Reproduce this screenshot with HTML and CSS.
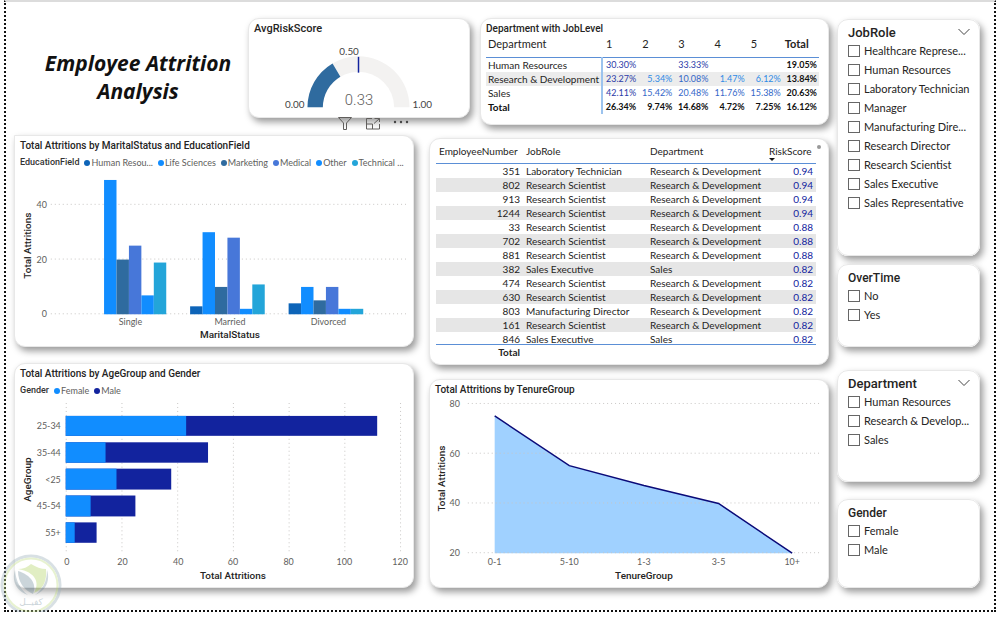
FILE: index.html
```html
<!DOCTYPE html>
<html lang="en">
<head>
    <meta charset="UTF-8">
    <meta name="viewport" content="width=device-width, initial-scale=1.0">
    <title>Employee Attrition Analysis</title>
    <link rel="stylesheet" href="styles.css">
</head>
<body>
    <div class="report">
        <main class="main">
            <header class="top-row">
                <h1>Employee Attrition Analysis</h1>

                <section class="card gauge">
                    <h2 class="gauge-title">AvgRiskScore</h2>
                    <svg class="chart" viewBox="0 0 222 80">
                        <path d="M59 70 A51.5 51.5 0 0 1 162 70 H146.500 A36 36 0 0 0 74.500 70 Z" fill="#f3f2f1"/>
                        <path d="M59 70 A51.5 51.5 0 0 1 84.300 25.700 L92.200 39 A36 36 0 0 0 74.500 70 Z" fill="#2f6b9f"/>
                        <path d="M110.500 19 V35" stroke="#12239e" stroke-width="1.500"/>
                        <text class="gauge-label" x="101" y="17" text-anchor="middle">0.50</text>
                        <text class="gauge-label" x="56" y="71" text-anchor="end">0.00</text>
                        <text class="gauge-label" x="165" y="71">1.00</text>
                        <text class="gauge-value" x="111" y="68" text-anchor="middle">0.33</text>
                    </svg>
                    <div class="toolbar">
                        <button type="button" aria-label="Filters">
                            <svg width="16" height="14" viewBox="0 0 16 14"><path d="M1.500 0.500 H14.500 L9.500 6 V12.500 H6.500 V6 Z" fill="none" stroke="#605e5c"/></svg>
                        </button>
                        <button type="button" aria-label="Focus mode">
                            <svg width="16" height="14" viewBox="0 0 16 14"><path d="M7 1.500 H1.500 V12 H14.500 V7 M1.500 7 H7.500 V12 M9.500 1.500 H14.500 V5 M14.500 1.500 L9 6.500" fill="none" stroke="#605e5c"/></svg>
                        </button>
                        <button type="button" aria-label="More options">
                            <svg width="16" height="14" viewBox="0 0 16 14"><g fill="#444"><circle cx="2" cy="5" r="1.200"/><circle cx="8" cy="5" r="1.200"/><circle cx="14" cy="5" r="1.200"/></g></svg>
                        </button>
                    </div>
                </section>

                <section class="card matrix-card">
                    <h2>Department with JobLevel</h2>
                    <table class="matrix">
                        <thead>
                            <tr><th class="dept">Department</th><th>1</th><th>2</th><th>3</th><th>4</th><th>5</th><th class="total">Total</th></tr>
                        </thead>
                        <tbody>
                            <tr><th>Human Resources</th><td class="dark">30.30%</td><td></td><td class="dark">33.33%</td><td></td><td></td><td class="total">19.05%</td></tr>
                            <tr class="alt"><th>Research &amp; Development</th><td class="dark">23.27%</td><td class="light">5.34%</td><td class="mid">10.08%</td><td class="light">1.47%</td><td class="light">6.12%</td><td class="total">13.84%</td></tr>
                            <tr><th>Sales</th><td class="dark">42.11%</td><td class="mid">15.42%</td><td class="mid">20.48%</td><td class="mid">11.76%</td><td class="mid">15.38%</td><td class="total">20.63%</td></tr>
                        </tbody>
                        <tfoot>
                            <tr><th>Total</th><td>26.34%</td><td>9.74%</td><td>14.68%</td><td>4.72%</td><td>7.25%</td><td>16.12%</td></tr>
                        </tfoot>
                    </table>
                </section>
            </header>

            <div class="column column-left">
                <section class="card card-marital">
                    <h2>Total Attritions by MaritalStatus and EducationField</h2>
                    <div class="legend">
                        <b>EducationField</b>
                        <span class="key hr">Human Resou...</span>
                        <span class="key life">Life Sciences</span>
                        <span class="key marketing">Marketing</span>
                        <span class="key medical">Medical</span>
                        <span class="key life">Other</span>
                        <span class="key technical">Technical ...</span>
                    </div>
                    <svg class="chart" viewBox="0 0 400 174">
                        <g class="grid">
                            <path d="M36 31.500 H394"/>
                            <path d="M36 86.500 H394"/>
                            <path d="M36 141.500 H394"/>
                        </g>
                        <!-- Single -->
                        <rect x="89.500" y="7" width="12.500" height="135" fill="#118dff"/>
                        <rect x="102" y="87" width="12.500" height="55" fill="#2f6b9f"/>
                        <rect x="114.500" y="73" width="12.500" height="69" fill="#4777d9"/>
                        <rect x="127" y="123" width="12.500" height="19" fill="#118dff"/>
                        <rect x="139.500" y="90" width="12.500" height="52" fill="#23a5d9"/>
                        <!-- Married -->
                        <rect x="176" y="134" width="12.500" height="8" fill="#0d64b8"/>
                        <rect x="188.500" y="59.500" width="12.500" height="82.500" fill="#118dff"/>
                        <rect x="201" y="114.500" width="12.500" height="27.500" fill="#2f6b9f"/>
                        <rect x="213.500" y="65" width="12.500" height="77" fill="#4777d9"/>
                        <rect x="226" y="136.500" width="12.500" height="5.500" fill="#118dff"/>
                        <rect x="238.500" y="112" width="12.500" height="30" fill="#23a5d9"/>
                        <!-- Divorced -->
                        <rect x="275" y="131" width="12.500" height="11" fill="#0d64b8"/>
                        <rect x="287.500" y="114.500" width="12.500" height="27.500" fill="#118dff"/>
                        <rect x="300" y="128" width="12.500" height="14" fill="#2f6b9f"/>
                        <rect x="312.500" y="114.500" width="12.500" height="27.500" fill="#4777d9"/>
                        <rect x="325" y="136.500" width="12.500" height="5.500" fill="#118dff"/>
                        <rect x="337.500" y="136.500" width="12.500" height="5.500" fill="#23a5d9"/>
                        <g class="tick" text-anchor="end">
                            <text x="32" y="35">40</text>
                            <text x="32" y="90">20</text>
                            <text x="32" y="145">0</text>
                        </g>
                        <g class="tick" text-anchor="middle">
                            <text x="116" y="153">Single</text>
                            <text x="216" y="153">Married</text>
                            <text x="315" y="153">Divorced</text>
                        </g>
                        <text class="axis" x="216" y="166" text-anchor="middle">MaritalStatus</text>
                        <text class="axis" transform="translate(16 73) rotate(-90)" text-anchor="middle">Total Attritions</text>
                    </svg>
                </section>

                <section class="card card-age">
                    <h2>Total Attritions by AgeGroup and Gender</h2>
                    <div class="legend">
                        <b>Gender</b>
                        <span class="key life">Female</span>
                        <span class="key male">Male</span>
                    </div>
                    <svg class="chart" viewBox="0 0 400 187">
                        <g class="grid">
                            <path d="M51.500 2 V153"/>
                            <path d="M107.500 2 V153"/>
                            <path d="M163.500 2 V153"/>
                            <path d="M219.500 2 V153"/>
                            <path d="M275.500 2 V153"/>
                            <path d="M331.500 2 V153"/>
                            <path d="M387.500 2 V153"/>
                        </g>
                        <g fill="#12239e">
                            <rect x="51" y="15" width="313" height="20"/>
                            <rect x="51" y="41.500" width="143" height="20.500"/>
                            <rect x="51" y="68" width="106" height="21"/>
                            <rect x="51" y="95" width="70" height="21"/>
                            <rect x="51" y="122" width="31" height="20.500"/>
                        </g>
                        <g fill="#118dff">
                            <rect x="51" y="15" width="121" height="20"/>
                            <rect x="51" y="41.500" width="40" height="20.500"/>
                            <rect x="51" y="68" width="51" height="21"/>
                            <rect x="51" y="95" width="25" height="21"/>
                            <rect x="51" y="122" width="9" height="20.500"/>
                        </g>
                        <g class="tick" text-anchor="end">
                            <text x="46" y="28">25-34</text>
                            <text x="46" y="55">35-44</text>
                            <text x="46" y="82">&lt;25</text>
                            <text x="46" y="109">45-54</text>
                            <text x="46" y="136">55+</text>
                        </g>
                        <g class="tick" text-anchor="middle">
                            <text x="52" y="165">0</text>
                            <text x="108" y="165">20</text>
                            <text x="164" y="165">40</text>
                            <text x="219" y="165">60</text>
                            <text x="275" y="165">80</text>
                            <text x="331" y="165">100</text>
                            <text x="387" y="165">120</text>
                        </g>
                        <text class="axis" x="219" y="179" text-anchor="middle">Total Attritions</text>
                        <text class="axis" transform="translate(16 79) rotate(-90)" text-anchor="middle">AgeGroup</text>
                    </svg>
                </section>
            </div>

            <div class="column column-mid">
                <section class="card card-employees">
                    <div class="employees-scroll">
                        <table class="employees">
                            <thead>
                                <tr><th class="num">EmployeeNumber</th><th class="role">JobRole</th><th>Department</th><th class="risk">RiskScore</th></tr>
                            </thead>
                            <tbody>
                                <tr><td>351</td><td>Laboratory Technician</td><td>Research &amp; Development</td><td>0.94</td></tr>
                                <tr><td>802</td><td>Research Scientist</td><td>Research &amp; Development</td><td>0.94</td></tr>
                                <tr><td>913</td><td>Research Scientist</td><td>Research &amp; Development</td><td>0.94</td></tr>
                                <tr><td>1244</td><td>Research Scientist</td><td>Research &amp; Development</td><td>0.94</td></tr>
                                <tr><td>33</td><td>Research Scientist</td><td>Research &amp; Development</td><td>0.88</td></tr>
                                <tr><td>702</td><td>Research Scientist</td><td>Research &amp; Development</td><td>0.88</td></tr>
                                <tr><td>881</td><td>Research Scientist</td><td>Research &amp; Development</td><td>0.88</td></tr>
                                <tr><td>382</td><td>Sales Executive</td><td>Sales</td><td>0.82</td></tr>
                                <tr><td>474</td><td>Research Scientist</td><td>Research &amp; Development</td><td>0.82</td></tr>
                                <tr><td>630</td><td>Research Scientist</td><td>Research &amp; Development</td><td>0.82</td></tr>
                                <tr><td>803</td><td>Manufacturing Director</td><td>Research &amp; Development</td><td>0.82</td></tr>
                                <tr><td>161</td><td>Research Scientist</td><td>Research &amp; Development</td><td>0.82</td></tr>
                                <tr><td>846</td><td>Sales Executive</td><td>Sales</td><td>0.82</td></tr>
                            </tbody>
                            <tfoot>
                                <tr><td>Total</td><td></td><td></td><td></td></tr>
                            </tfoot>
                        </table>
                    </div>
                    <span class="scroll-dot"></span>
                </section>

                <section class="card card-tenure">
                    <h2>Total Attritions by TenureGroup</h2>
                    <svg class="chart" viewBox="0 0 400 192">
                        <path d="M65 20 L140 70 L215 90 L290 108 L364 158 H65 Z" fill="#a0d1ff"/>
                        <g class="grid">
                            <path d="M38 7.500 H393"/>
                            <path d="M38 57.500 H393"/>
                            <path d="M38 107.500 H393"/>
                            <path d="M38 157.500 H393"/>
                        </g>
                        <path d="M65 20 L140 70 L215 90 L290 108 L364 158" fill="none" stroke="#0a0a78" stroke-width="1.500"/>
                        <g class="tick" text-anchor="end">
                            <text x="30" y="11">80</text>
                            <text x="30" y="61">60</text>
                            <text x="30" y="111">40</text>
                            <text x="30" y="161">20</text>
                        </g>
                        <g class="tick" text-anchor="middle">
                            <text x="65" y="170">0-1</text>
                            <text x="140" y="170">5-10</text>
                            <text x="215" y="170">1-3</text>
                            <text x="290" y="170">3-5</text>
                            <text x="364" y="170">10+</text>
                        </g>
                        <text class="axis" x="215" y="184" text-anchor="middle">TenureGroup</text>
                        <text class="axis" transform="translate(15 83) rotate(-90)" text-anchor="middle">Total Attritions</text>
                    </svg>
                </section>
            </div>
        </main>

        <aside class="slicers">
            <fieldset class="card slicer slicer-role">
                <div class="slicer-head">
                    <h3 class="large">JobRole</h3>
                    <button type="button" aria-label="Expand JobRole"><svg width="12" height="8" viewBox="0 0 12 8"><path d="M0.500 1 L6 6.500 L11.500 1" fill="none" stroke="#444"/></svg></button>
                </div>
                <label><input type="checkbox">Healthcare Represe...</label>
                <label><input type="checkbox">Human Resources</label>
                <label><input type="checkbox">Laboratory Technician</label>
                <label><input type="checkbox">Manager</label>
                <label><input type="checkbox">Manufacturing Dire...</label>
                <label><input type="checkbox">Research Director</label>
                <label><input type="checkbox">Research Scientist</label>
                <label><input type="checkbox">Sales Executive</label>
                <label><input type="checkbox">Sales Representative</label>
            </fieldset>

            <fieldset class="card slicer slicer-overtime">
                <div class="slicer-head">
                    <h3>OverTime</h3>
                </div>
                <label><input type="checkbox">No</label>
                <label><input type="checkbox">Yes</label>
            </fieldset>

            <fieldset class="card slicer slicer-department">
                <div class="slicer-head">
                    <h3 class="large">Department</h3>
                    <button type="button" aria-label="Expand Department"><svg width="12" height="8" viewBox="0 0 12 8"><path d="M0.500 1 L6 6.500 L11.500 1" fill="none" stroke="#444"/></svg></button>
                </div>
                <label><input type="checkbox">Human Resources</label>
                <label><input type="checkbox">Research &amp; Develop...</label>
                <label><input type="checkbox">Sales</label>
            </fieldset>

            <fieldset class="card slicer slicer-gender">
                <div class="slicer-head">
                    <h3>Gender</h3>
                </div>
                <label><input type="checkbox">Female</label>
                <label><input type="checkbox">Male</label>
            </fieldset>
        </aside>

        <svg class="watermark" width="64" height="64" viewBox="0 0 64 64">
            <circle cx="32" cy="32" r="29" fill="#ffffff" fill-opacity="0.4" stroke="#9fb3bd" stroke-width="3"/>
            <circle cx="32" cy="32" r="26.500" fill="none" stroke="#c5e08c" stroke-width="2"/>
            <path d="M32 11 C37 14 42 16 47 16 C48 27 45 36 35 40 C41 30 37 19 19 16 C24 16 29 14 32 11 Z" fill="#b5d66b"/>
            <path d="M19 18 C32 22 38 31 34 41 C25 37 19 29 19 18 Z" fill="#7f98a5"/>
            <path d="M16 17 C12 29 19 39 29 42 C21 36 17 28 16 17 Z M48 17 C52 29 45 39 36 42 C44 36 48 28 48 17 Z" fill="#8fa5b0"/>
            <text x="32" y="52" text-anchor="middle">كفيــل</text>
        </svg>
    </div>
</body>
</html>
```

FILE: styles.css
```css
* {
    box-sizing: border-box;
}

body {
    margin: 0;
    background-color: #fff;
    color: #252423;
    font-family: Lato, "Open Sans", sans-serif;
    font-size: 10px;
}

h1, h2, h3 {
    margin: 0;
}

button {
    display: flex;
    padding: 0;
    border: none;
    background: none;
    cursor: pointer;
}

.report {
    position: relative;
    display: grid;
    grid-template-columns: minmax(0, 815fr) minmax(0, 143fr);
    gap: 8px;
    margin: 0 4px;
    padding: 16px 14px 22px 8px;
    border: 2px dotted #111;
    border-top: 2px solid #dcdcdc;
}

.main {
    display: grid;
    grid-template-columns: minmax(0, 1fr) minmax(0, 1fr);
    column-gap: 15px;
    align-content: start;
}

.top-row {
    grid-column: 1 / 3;
    display: grid;
    grid-template-columns: minmax(0, 224fr) minmax(0, 222fr) minmax(0, 349fr);
    gap: 10px;
    align-items: start;
}

h1 {
    padding: 31px 0 0 24px;
    font-family: "Open Sans", sans-serif;
    font-size: 21px;
    line-height: 28px;
    font-style: italic;
    text-align: center;
    color: #111;
}

.card {
    position: relative;
    min-width: 0;
    background-color: #fff;
    border: 1px solid #e8e8e8;
    border-radius: 11px;
    box-shadow: 3px 4px 7px rgba(0, 0, 0, 0.4);
}

.card h2 {
    padding: 3px 5px 0;
    font-family: Roboto, sans-serif;
    font-size: 10px;
    line-height: 13px;
    font-weight: 500;
    white-space: nowrap;
}

.chart {
    display: block;
    width: 100%;
    height: auto;
}

.grid path {
    fill: none;
    stroke: #c8c6c4;
    stroke-dasharray: 1 3;
}

.tick {
    fill: #605e5c;
    font-size: 9px;
}

.axis {
    fill: #252423;
    font-family: Roboto, sans-serif;
    font-size: 10px;
    font-weight: 500;
}

/* gauge */
.card .gauge-title {
    padding-bottom: 3px;
    font-size: 11px;
}

.gauge-label {
    fill: #444;
    font-size: 10px;
}

.gauge-value {
    fill: #605e5c;
    font-family: Roboto, sans-serif;
    font-size: 15px;
    font-weight: 300;
}

.toolbar {
    position: absolute;
    top: 100%;
    right: 60px;
    display: flex;
    gap: 12px;
}

/* department matrix */
.matrix-card {
    min-height: 107px;
}

.matrix {
    width: calc(100% - 14px);
    margin: 0 9px 0 5px;
    border-collapse: collapse;
    table-layout: fixed;
    font-size: 9px;
    line-height: 14px;
}

.matrix th, .matrix td {
    padding: 0 2px;
    white-space: nowrap;
}

.matrix th {
    font-size: 10px;
    font-weight: 400;
    text-align: left;
}

.matrix thead th {
    padding: 2px 4px 6px;
    border-bottom: 1px solid #5b8fd6;
    font-size: 11px;
}

.matrix thead .dept {
    width: 116px;
    padding-left: 2px;
}

.matrix thead .total {
    padding-left: 2px;
    font-weight: 700;
}

.matrix tbody th, .matrix tfoot th {
    border-right: 2px solid #9cc3ee;
}

.matrix td {
    text-align: right;
}

.matrix .dark {
    color: #2b3ba8;
}

.matrix .mid {
    color: #3467c8;
}

.matrix .light {
    color: #2f8be6;
}

.matrix tbody .total, .matrix tfoot td, .matrix tfoot th {
    color: #111;
    font-weight: 700;
}

.alt {
    background-color: #ececec;
}

/* chart columns */
.column {
    display: flex;
    flex-direction: column;
}

.column-left {
    gap: 16px;
    padding-top: 10px;
}

.column-mid {
    gap: 14px;
    padding-top: 13px;
}

.card-marital {
    border-top-left-radius: 0;
}

.legend {
    display: flex;
    align-items: center;
    gap: 5px;
    padding: 4px 5px;
    color: #605e5c;
    font-size: 9px;
    line-height: 13px;
    white-space: nowrap;
}

.legend b {
    color: #333;
    font-family: Roboto, sans-serif;
    font-weight: 500;
}

.key {
    display: flex;
    align-items: center;
    gap: 1px;
}

.key::before {
    content: "";
    width: 6px;
    height: 6px;
    border-radius: 50%;
    background-color: #118dff;
}

.hr::before {
    background-color: #0d64b8;
}

.marketing::before {
    background-color: #2f6b9f;
}

.medical::before {
    background-color: #4777d9;
}

.technical::before {
    background-color: #23a5d9;
}

.male::before {
    background-color: #12239e;
}

/* employee table */
.card-employees {
    padding: 5px 12px 5px 6px;
}

.employees-scroll {
    height: 215px;
    overflow: hidden;
}

.employees {
    width: 100%;
    border-collapse: separate;
    border-spacing: 0;
    table-layout: fixed;
    line-height: 14px;
}

.employees th {
    padding: 0 3px 5px;
    border-bottom: 1px solid #5b8fd6;
    font-weight: 400;
    text-align: left;
}

.employees td {
    padding: 0 3px;
    white-space: nowrap;
}

.employees .num {
    width: 87px;
}

.employees .role {
    width: 124px;
}

.employees .risk {
    width: 50px;
}

.employees .risk::after {
    content: "";
    display: block;
    width: 0;
    height: 0;
    margin-bottom: -3px;
    border: 3px solid transparent;
    border-top-color: #111;
    border-bottom: none;
}

.employees td:first-child, .employees td:last-child {
    text-align: right;
}

.employees td:last-child {
    color: #12239e;
}

.employees tbody tr:nth-child(even) {
    background-color: #e6e6e6;
}

.employees tfoot td {
    position: sticky;
    bottom: 0;
    background-color: #fff;
    border-top: 1px solid #5b8fd6;
    font-weight: 700;
}

.scroll-dot {
    position: absolute;
    top: 6px;
    right: 7px;
    width: 4px;
    height: 4px;
    border-radius: 50%;
    background-color: #999;
}

/* slicers */
.slicers {
    display: flex;
    flex-direction: column;
    padding-top: 1px;
}

.slicer {
    margin: 0;
    padding: 5px 4px 5px 10px;
}

.slicer-head {
    display: flex;
    justify-content: space-between;
    padding-right: 5px;
}

.slicer h3 {
    font-family: Roboto, sans-serif;
    font-size: 12px;
    line-height: 16px;
    font-weight: 500;
}

.slicer .large {
    font-size: 13px;
}

.slicer label {
    display: flex;
    align-items: center;
    gap: 4px;
    font-size: 11px;
    line-height: 19px;
    white-space: nowrap;
}

.slicer input {
    appearance: none;
    width: 12px;
    height: 12px;
    margin: 0;
    border: 1px solid #666;
    background-color: #fff;
}

.slicer input:checked {
    background-color: #333;
}

.slicer-head button {
    padding-top: 3px;
}

.slicer-role {
    min-height: 237px;
    margin-bottom: 8px;
}

.slicer-overtime {
    min-height: 83px;
    margin-bottom: 23px;
}

.slicer-department {
    min-height: 112px;
    margin-bottom: 17px;
}

.slicer-gender {
    min-height: 89px;
}

.watermark {
    position: absolute;
    left: -7px;
    bottom: -7px;
    opacity: 0.4;
    pointer-events: none;
}

.watermark text {
    fill: #7f98a5;
    font-family: "DejaVu Sans", sans-serif;
    font-size: 9px;
}
```
